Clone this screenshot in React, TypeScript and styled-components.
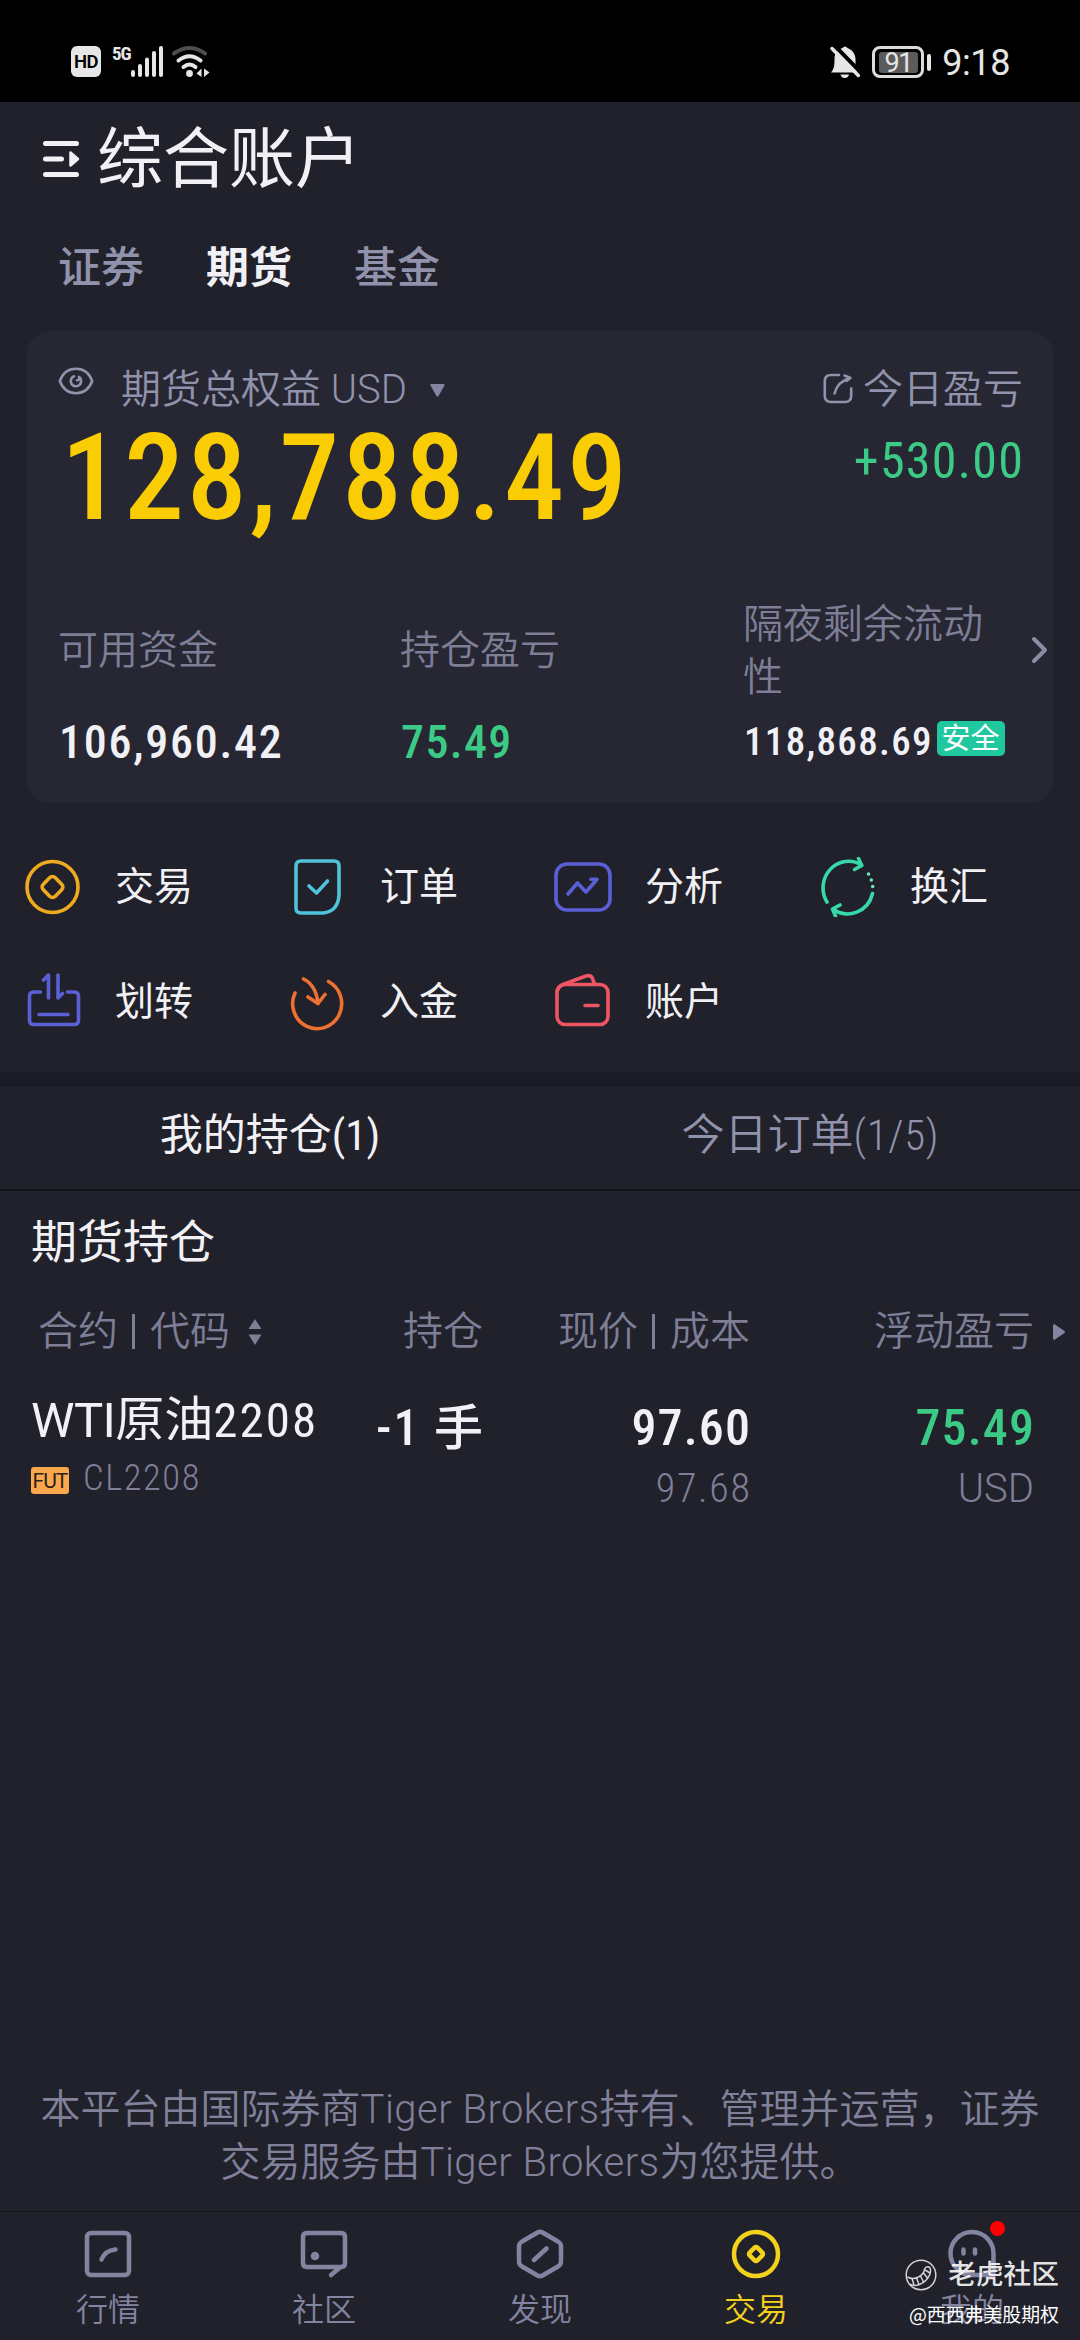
import React from 'react';
import styled, { createGlobalStyle } from 'styled-components';

const c = {
  page: '#21212b',
  card: '#272733',
  band: '#1b1b25',
  line: '#14141c',
  white: '#f1f1f5',
  soft: '#9192ab',
  muted: '#7e7e97',
  green: '#3ccb86',
  gold: '#facc04',
};

const GlobalStyle = createGlobalStyle`
  * { box-sizing: border-box; }
  body {
    margin: 0;
    background: ${c.page};
    font-family: 'Roboto Condensed', 'Noto Sans CJK SC', sans-serif;
    font-weight: 400;
    color: ${c.white};
  }
  svg { display: block; flex: none; }
`;

const Screen = styled.div`
  position: relative;
  display: flex;
  flex-direction: column;
  width: 1080px;
  height: 2340px;
  overflow: hidden;
  background: ${c.page};
`;

/* Figures, tracked a little wider than the Chinese text */
const Num = styled.span<{ $ls?: number }>`
  letter-spacing: ${(p) => p.$ls ?? 0.043}em;
  margin-right: -${(p) => p.$ls ?? 0.043}em;
`;
/* Latin words in the full-width face */
const Latin = styled.span<{ $ls?: number }>`
  font-family: Roboto, sans-serif;
  letter-spacing: ${(p) => p.$ls ?? 0}em;
`;

/* ---------- status bar ---------- */
const StatusBar = styled.header`
  display: flex;
  justify-content: space-between;
  align-items: flex-start;
  height: 102px;
  padding: 46px 70px 0 71px;
  background: #000;
  color: #e6e6e6;
`;
const StatusGroup = styled.div`
  display: flex;
  align-items: flex-start;
`;
const HdBadge = styled.span`
  width: 30px;
  height: 31px;
  border-radius: 6px;
  background: #e6e6e6;
  color: #000;
  font-family: Roboto, sans-serif;
  font-size: 18.5px;
  font-weight: 600;
  line-height: 33px;
  text-align: center;
  letter-spacing: -0.5px;
`;
const NetLabel = styled.span`
  margin-left: 11px;
  font-size: 19px;
  font-weight: 700;
  line-height: 15px;
  letter-spacing: -1px;
`;
const WifiSlot = styled.span`
  margin-left: 6px;
`;
const Battery = styled.span`
  display: flex;
  align-items: center;
  justify-content: center;
  width: 52px;
  height: 32px;
  margin-left: 12px;
  border: 3px solid #dcdcdc;
  border-radius: 8px;
`;
const BatteryLevel = styled.span`
  width: 39px;
  height: 21px;
  border-radius: 3px;
  background: #5b5b5b;
  font-family: Roboto, sans-serif;
  font-size: 27px;
  line-height: 22px;
  letter-spacing: -1.5px;
  text-align: center;
`;
const BatteryNub = styled.span`
  width: 4px;
  height: 17px;
  margin: 8px 0 0 3px;
  border-radius: 2px;
  background: #e6e6e6;
`;
const Clock = styled.span`
  margin-left: 11px;
  font-family: Roboto, sans-serif;
  font-size: 36px;
  line-height: 34px;
  letter-spacing: -0.4px;
`;

/* ---------- title and account tabs ---------- */
const TitleRow = styled.div`
  display: flex;
  align-items: center;
  height: 116px;
  padding-left: 43px;
`;
const MenuSlot = styled.span`
  margin-top: -3px;
`;
const Title = styled.h1`
  margin: 0 0 0 17px;
  font-size: 66px;
  font-weight: 400;
  line-height: 116px;
`;
const AccountTabs = styled.nav`
  display: flex;
  gap: 62px;
  height: 100px;
  padding-left: 58px;
`;
const AccountTab = styled.span<{ $on?: boolean }>`
  font-size: 43px;
  font-weight: ${(p) => (p.$on ? 600 : 500)};
  line-height: 100px;
  color: ${(p) => (p.$on ? c.white : c.soft)};
`;

/* ---------- equity card ---------- */
const Card = styled.section`
  height: 472px;
  margin: 13px 26px 0;
  padding: 35px 0 0 32px;
  border-radius: 25px;
  background: ${c.card};
`;
const CardTop = styled.div`
  display: flex;
  justify-content: space-between;
  padding-right: 31px;
`;
const LabelLine = styled.div`
  display: flex;
  align-items: center;
  height: 48px;
  font-size: 40px;
  font-weight: 350;
  line-height: 48px;
  color: ${c.soft};
  white-space: pre;
`;
const EyeSlot = styled.span`
  margin: -19px 27px 0 0;
`;
const CaretSlot = styled.span`
  margin-left: 23px;
`;
const EditSlot = styled.span`
  margin: -3px 10px 0 0;
`;
const Equity = styled.div`
  margin: 14px 0 0 3px;
  font-size: 120px;
  font-weight: 500;
  line-height: 100px;
  color: ${c.gold};
`;
const DayGain = styled.div`
  margin-top: 22px;
  font-size: 50px;
  font-weight: 400;
  line-height: 50px;
  text-align: right;
  color: ${c.green};
`;
const Stats = styled.div`
  display: grid;
  grid-template-columns: 342px 343px 260px 1fr;
  grid-template-rows: 105px 50px;
  row-gap: 13px;
  margin-top: 71px;
`;
const StatLabel = styled.div`
  align-self: center;
  max-width: 242px;
  font-size: 40px;
  font-weight: 350;
  line-height: 52.7px;
  color: ${c.muted};
`;
const StatValue = styled.div<{ $size?: number; $tone?: string }>`
  display: flex;
  align-items: center;
  padding-left: 1px;
  font-size: ${(p) => p.$size ?? 46}px;
  font-weight: 500;
  line-height: 50px;
  white-space: nowrap;
  color: ${(p) => p.$tone ?? c.white};
`;
const SafeBadge = styled.span`
  margin: -8px 0 0 5px;
  padding: 0 5px;
  height: 35px;
  border-radius: 5px;
  background: #20c8a0;
  font-size: 29px;
  font-weight: 400;
  line-height: 36px;
  color: #fff;
`;
const ChevronSlot = styled.div`
  align-self: center;
  justify-self: end;
  margin: -4px 6px 0 0;
`;

/* ---------- shortcuts ---------- */
const Shortcuts = styled.div`
  display: grid;
  grid-template-columns: repeat(4, 265px);
  grid-auto-rows: 115px;
  margin: 26px 0 13px;
  padding-left: 22px;
`;
const Shortcut = styled.div`
  display: flex;
  align-items: center;
  gap: 33px;
  font-size: 39px;
  line-height: 60px;
`;

/* ---------- positions ---------- */
const Band = styled.div`
  height: 15px;
  background: ${c.band};
`;
const ListTabs = styled.div`
  display: grid;
  grid-template-columns: 1fr 1fr;
  height: 104px;
  border-bottom: 2px solid ${c.line};
`;
const ListTab = styled.div<{ $on?: boolean }>`
  font-size: 43px;
  font-weight: ${(p) => (p.$on ? 400 : 350)};
  line-height: 96px;
  text-align: center;
  color: ${(p) => (p.$on ? c.white : c.soft)};
`;
const SectionTitle = styled.h2`
  margin: 0;
  padding: 0 0 3px 31px;
  font-size: 46px;
  font-weight: 400;
  line-height: 103px;
`;
const TableRow = styled.div`
  display: grid;
  grid-template-columns: 300px 151px 267px 284px 1fr;
  padding-left: 32px;
`;
const HeadCell = styled.div<{ $first?: boolean }>`
  display: flex;
  align-items: center;
  justify-content: ${(p) => (p.$first ? 'flex-start' : 'flex-end')};
  height: 69px;
  padding-left: ${(p) => (p.$first ? 6 : 0)}px;
  font-size: 40px;
  font-weight: 350;
  line-height: 68px;
  color: ${c.muted};
  white-space: nowrap;
`;
const Bar = styled.i`
  width: 3px;
  height: 35px;
  margin: 0 15px 0 14px;
  background: ${c.muted};
`;
const SortSlot = styled.span`
  margin-left: 18px;
`;
const MoreSlot = styled.span`
  margin-right: 15px;
`;
const Contract = styled.div`
  padding-top: 24px;
`;
const ContractName = styled.div`
  height: 50px;
  overflow: hidden;
  margin-left: -1px;
  font-size: 49px;
  line-height: 62px;
  white-space: nowrap;
`;
const ContractCode = styled.div`
  display: flex;
  align-items: center;
  height: 40px;
  margin-top: 18px;
  font-size: 36.5px;
  font-weight: 350;
  line-height: 40px;
  color: ${c.muted};
`;
const FutTag = styled.span`
  width: 38px;
  height: 27px;
  margin: 5px 14px 0 -1px;
  border-radius: 3px;
  background: #f9a84e;
  font-family: Roboto, sans-serif;
  font-size: 21px;
  font-weight: 400;
  line-height: 28px;
  letter-spacing: -1px;
  text-align: center;
  color: #2c2118;
`;
const Figures = styled.div`
  padding-top: 32px;
  text-align: right;
`;
const Primary = styled.div<{ $tone?: string }>`
  font-size: 50px;
  font-weight: 500;
  line-height: 60px;
  white-space: pre;
  color: ${(p) => p.$tone ?? c.white};
`;
const Amount = styled.span`
  letter-spacing: 0.04em;
`;
const Unit = styled.span`
  font-size: 49px;
`;
const Secondary = styled.div`
  margin-top: 1px;
  font-size: 40px;
  font-weight: 350;
  line-height: 60px;
  color: ${c.muted};
`;

/* ---------- footer ---------- */
const Disclaimer = styled.p`
  margin: auto 0 22px;
  font-size: 40px;
  font-weight: 350;
  line-height: 53px;
  text-align: center;
  white-space: nowrap;
  color: #81819b;
`;
const TabBar = styled.nav`
  display: grid;
  grid-template-columns: repeat(5, 1fr);
  height: 129px;
  border-top: 1px solid ${c.line};
`;
const TabItem = styled.div<{ $on?: boolean }>`
  display: flex;
  flex-direction: column;
  align-items: center;
  padding-top: 17px;
  font-size: 32px;
  font-weight: 350;
  line-height: 40px;
  color: ${(p) => (p.$on ? '#f2d21c' : '#8384a0')};
`;
const TabIcon = styled.span`
  position: relative;
  margin-bottom: 11px;
`;
const RedDot = styled.i`
  position: absolute;
  top: -8px;
  right: -8px;
  width: 15px;
  height: 15px;
  border-radius: 50%;
  background: #fe0000;
`;
const Watermark = styled.div`
  position: absolute;
  right: 21px;
  bottom: 6px;
  display: flex;
  flex-direction: column;
  align-items: flex-end;
  color: rgba(255, 255, 255, 0.88);
`;
const WatermarkBrand = styled.div`
  display: flex;
  align-items: center;
  gap: 11px;
  font-size: 27.7px;
  font-weight: 500;
  line-height: 42px;
`;
const WatermarkUser = styled.div`
  font-family: 'Noto Sans CJK SC', sans-serif;
  font-size: 18.9px;
  line-height: 36px;
  padding-bottom: 2px;
  color: #fff;
`;

/* ---------- icons ---------- */
type IconProps = { w?: number; h?: number; color?: string; sw?: number; children: React.ReactNode };
function Icon({ w = 60, h = 60, color = 'currentColor', sw = 3.6, children }: IconProps) {
  return (
    <svg width={w} height={h} viewBox={`0 0 ${w} ${h}`} fill="none" stroke={color} strokeWidth={sw} strokeLinecap="round" strokeLinejoin="round">
      {children}
    </svg>
  );
}

const SignalBars = () => (
  <svg width="34" height="31" viewBox="0 0 34 31" fill="#e6e6e6">
    <rect x="0" y="24" width="4" height="7" rx="2" />
    <rect x="7" y="18" width="4" height="13" rx="2" />
    <rect x="14" y="11.5" width="4" height="19.5" rx="2" />
    <rect x="21" y="5" width="4" height="26" rx="2" />
    <rect x="28" y="0" width="4" height="31" rx="2" />
  </svg>
);
const Wifi = () => (
  <svg width="40" height="34" viewBox="0 0 40 34" fill="none" strokeLinecap="round" strokeWidth="4">
    <path d="M3 7.5Q18.500 -3.500 34 7.500" stroke="#4d4d4d" />
    <path d="M7.500 14.500Q18.500 6 29.500 14.500" stroke="#e6e6e6" />
    <path d="M12.500 21Q18.500 16 24.500 21" stroke="#e6e6e6" />
    <circle cx="18.500" cy="27.500" r="3.400" fill="#e6e6e6" />
    <path d="M30.500 22.500V31L25.500 27.500ZM33 22.500V31L38.500 26.500Z" fill="#e6e6e6" />
  </svg>
);
const BellOff = () => (
  <svg width="30" height="32" viewBox="0 0 30 32" fill="none" strokeLinecap="round">
    <path d="M1 26.500C4 23 4.500 20 4.500 13C4.500 6 9 3 12.500 2Q15 -1 17.500 2C22 3.500 25.500 8 25.500 13V20L27 26.500Z" fill="#e6e6e6" />
    <path d="M10.500 28.500H19Q18 32 14.700 32T10.500 28.500Z" fill="#e6e6e6" />
    <path d="M5 0L30 25.500" stroke="#000" strokeWidth="4" />
    <path d="M2 2.500L28.300 29.500" stroke="#e6e6e6" strokeWidth="3.400" />
  </svg>
);
const MenuIcon = () => (
  <svg width="37" height="38" viewBox="0 0 37 38">
    <g stroke={c.white} strokeWidth="5" strokeLinecap="round">
      <path d="M2.500 3.500H33.500M2.500 19H18.500M2.500 34.500H33.500" />
    </g>
    <path d="M27.500 12.500L35 19L27.500 25.500Z" fill={c.white} stroke={c.white} strokeWidth="2.500" strokeLinejoin="round" />
  </svg>
);
const EyeIcon = () => (
  <Icon w={36} h={28} sw={2.6}>
    <path d="M1.800 14C5 5.500 10 1.800 18 1.800S31 5.500 34.200 14C31 22.500 26 26.200 18 26.200S5 22.500 1.800 14Z" />
    <path d="M16 9.300A5.200 5.200 0 1 0 21 9.900Q22.500 12.500 19 13.300" />
  </Icon>
);
const EditIcon = () => (
  <Icon w={30} h={31} sw={2.6}>
    <path d="M16 2H8Q1.800 2 1.800 8V23Q1.800 29 8 29H22Q28.200 29 28.200 23V15.500M11.500 20.500C13.500 13 18 7.500 27 5M21.500 2.500L27.500 5L23.500 8" />
  </Icon>
);
const Caret = () => (
  <svg width="15" height="13" viewBox="0 0 15 13" fill="#8485a2"><path d="M1 0H14Q15 .5 14.500 1.500L8.500 12Q7.500 13 6.500 12L.5 1.500Q0 .5 1 0Z" /></svg>
);
const SortIcon = () => (
  <svg width="14" height="26" viewBox="0 0 14 26" fill={c.muted}><path d="M7 0L13.500 10H.5ZM7 26L13.500 15.500H.5Z" /></svg>
);
const MoreIcon = () => (
  <svg width="12" height="16" viewBox="0 0 12 16" fill="#8485a2"><path d="M0 1Q.5 -.3 2 .5L11.500 7Q12.500 8 11.500 9L2 15.500Q.5 16.300 0 15Z" /></svg>
);
const Chevron = () => (
  <Icon w={17} h={28} color="#8c8ca6" sw={4}><path d="M3 3L14 14L3 25" /></Icon>
);

const shortcuts = [
  { label: '交易', icon: <Icon color="#efab1f"><circle cx="30.500" cy="30" r="25.500" /><rect x="22" y="21.500" width="17" height="17" rx="4" transform="rotate(45 30.500 30)" /></Icon> },
  { label: '订单', icon: <Icon color="#4fc3d9"><path d="M14 4H47Q52 4 52 9V38Q51 54.500 36 56H14Q9 56 9 51V9Q9 4 14 4ZM22 29L29.500 36L40.500 24" /></Icon> },
  { label: '分析', icon: <Icon color="#5b5fd6"><rect x="4" y="7" width="54" height="46" rx="11" /><path d="M16 37L25.500 26L34 35L44.500 23M39 22.300H45" /></Icon> },
  { label: '换汇', icon: (
    <Icon color="#35d9ab">
      <path d="M10 45A25.500 26.500 0 0 1 44.500 8M41.500 1.500L44.800 8.500L37.500 12.500M55.500 36.500A25.500 26.500 0 0 1 16 52M23 48L15.500 52L18.500 59" />
      <path d="M51.500 17V17.010M54.300 23V23.010M55.700 29.500V29.510" stroke="#6fe6c6" />
    </Icon>
  ) },
  { label: '划转', icon: <Icon color="#5b5fd6"><path d="M18.500 20H12Q7.500 20 7.500 24.500V48Q7.500 52.500 12 52.500H52Q56.500 52.500 56.500 48V24.500Q56.500 20 52 20H45.500M17 42.500H46M26.500 26V3L21.500 8M36 3V26L40.500 21.500" /></Icon> },
  { label: '入金', icon: <Icon color="#ee7130"><path d="M41.500 9.500A24.500 25 0 1 1 8 21M16.500 7Q29 13 31 31.500M21 25L31 31.500L38 22.500" /></Icon> },
  { label: '账户', icon: <Icon color="#ee5563"><rect x="5" y="12.500" width="51" height="40" rx="8" /><path d="M5 20Q6 14.500 11 12.500L34 4Q39 2.500 40.500 6.500L42.500 12M33 33.500H46" /></Icon> },
];

const tabs = [
  { label: '行情', icon: <Icon w={50} h={50} sw={4.5}><rect x="4" y="4" width="42" height="42" rx="4" /><path d="M18.500 30.500Q22 21.500 32.500 20.500" /></Icon> },
  { label: '社区', icon: <Icon w={50} h={50} sw={4.5}><path d="M8 4H42Q46 4 46 8V34Q46 38 42 38H8Q4 38 4 34V8Q4 4 8 4ZM41 38.500L32 46" /><circle cx="16" cy="27" r="2" /></Icon> },
  { label: '发现', icon: <Icon w={50} h={50} sw={4.5}><path d="M22.500 3.500Q25 2 27.500 3.500L43 12.500Q46 14.500 46 17V33Q46 35.500 43 37.500L27.500 46.500Q25 48 22.500 46.500L7 37.500Q4 35.500 4 33V17Q4 14.500 7 12.500ZM19 31L31.500 19.500" /></Icon> },
  { label: '交易', on: true, icon: <Icon w={50} h={50} sw={4.5}><circle cx="25" cy="25" r="22" /><rect x="19.500" y="19.500" width="11" height="11" rx="2" transform="rotate(45 25 25)" /></Icon> },
  { label: '我的', dot: true, icon: <Icon w={50} h={50} sw={4.5}><path d="M25 46A21.500 21.500 0 1 1 46.500 25V46H25" /><path d="M16.500 20.500V24.500M28 20.500V24.500" /></Icon> },
];

const TigerMark = () => (
  <svg width="32" height="32" viewBox="0 0 32 32" fill="none" stroke="rgba(255,255,255,.8)" strokeWidth="1.500">
    <circle cx="16" cy="16" r="14.800" />
    <path d="M2.500 18Q8 21 13.500 18Q19.500 14.500 19.500 10Q21 7 24 8Q26.500 9.500 25 15Q22 22.500 14.500 25.500Q8.500 27.500 5 25" />
    <path d="M7 19.500L9 26M11.500 19L14 25.500M15.500 17L18.500 23M18.500 14L22.500 19M20 11L25 14" />
  </svg>
);

export default function App() {
  return (
    <Screen>
      <GlobalStyle />
      <StatusBar>
        <StatusGroup>
          <HdBadge>HD</HdBadge>
          <NetLabel>5G</NetLabel>
          <SignalBars />
          <WifiSlot><Wifi /></WifiSlot>
        </StatusGroup>
        <StatusGroup>
          <BellOff />
          <Battery><BatteryLevel>91</BatteryLevel></Battery>
          <BatteryNub />
          <Clock>9:18</Clock>
        </StatusGroup>
      </StatusBar>

      <TitleRow>
        <MenuSlot><MenuIcon /></MenuSlot>
        <Title>综合账户</Title>
      </TitleRow>
      <AccountTabs>
        <AccountTab>证券</AccountTab>
        <AccountTab $on>期货</AccountTab>
        <AccountTab>基金</AccountTab>
      </AccountTabs>

      <Card>
        <CardTop>
          <div>
            <LabelLine>
              <EyeSlot><EyeIcon /></EyeSlot>
              <span>期货总权益<Latin> USD</Latin></span>
              <CaretSlot><Caret /></CaretSlot>
            </LabelLine>
            <Equity><Num $ls={0.024}>128,788.49</Num></Equity>
          </div>
          <div>
            <LabelLine>
              <EditSlot><EditIcon /></EditSlot>
              今日盈亏
            </LabelLine>
            <DayGain><Num $ls={0.026}>+530.00</Num></DayGain>
          </div>
        </CardTop>
        <Stats>
          <StatLabel>可用资金</StatLabel>
          <StatLabel>持仓盈亏</StatLabel>
          <StatLabel>隔夜剩余流动性</StatLabel>
          <ChevronSlot><Chevron /></ChevronSlot>
          <StatValue><Num $ls={0.038}>106,960.42</Num></StatValue>
          <StatValue $tone={c.green}><Num $ls={0.03}>75.49</Num></StatValue>
          <StatValue $size={39}><Num $ls={0.034}>118,868.69</Num><SafeBadge>安全</SafeBadge></StatValue>
        </Stats>
      </Card>

      <Shortcuts>
        {shortcuts.map((s) => (
          <Shortcut key={s.label}>{s.icon}{s.label}</Shortcut>
        ))}
      </Shortcuts>

      <Band />
      <ListTabs>
        <ListTab $on>我的持仓<Num $ls={0}>(1)</Num></ListTab>
        <ListTab>今日订单<Num $ls={0.015}>(1/5)</Num></ListTab>
      </ListTabs>
      <SectionTitle>期货持仓</SectionTitle>
      <TableRow>
        <HeadCell $first>合约<Bar />代码<SortSlot><SortIcon /></SortSlot></HeadCell>
        <HeadCell>持仓</HeadCell>
        <HeadCell>现价<Bar />成本</HeadCell>
        <HeadCell>浮动盈亏</HeadCell>
        <HeadCell><MoreSlot><MoreIcon /></MoreSlot></HeadCell>
      </TableRow>
      <TableRow>
        <Contract>
          <ContractName><Latin $ls={-0.015}>WTI</Latin>原油<Num>2208</Num></ContractName>
          <ContractCode><FutTag>FUT</FutTag><Num>CL2208</Num></ContractCode>
        </Contract>
        <Figures><Primary><Amount>-1 </Amount><Unit>手</Unit></Primary></Figures>
        <Figures>
          <Primary><Num $ls={0.023}>97.60</Num></Primary>
          <Secondary><Num>97.68</Num></Secondary>
        </Figures>
        <Figures>
          <Primary $tone={c.green}><Num $ls={0.023}>75.49</Num></Primary>
          <Secondary><Latin>USD</Latin></Secondary>
        </Figures>
      </TableRow>

      <Disclaimer>
        本平台由国际券商<Latin $ls={0.012}>Tiger Brokers</Latin>持有、管理并运营，证券<br />
        交易服务由<Latin $ls={0.012}>Tiger Brokers</Latin>为您提供。
      </Disclaimer>
      <TabBar>
        {tabs.map((t) => (
          <TabItem key={t.label} $on={t.on}>
            <TabIcon>{t.icon}{t.dot && <RedDot />}</TabIcon>
            {t.label}
          </TabItem>
        ))}
      </TabBar>
      <Watermark>
        <WatermarkBrand><TigerMark />老虎社区</WatermarkBrand>
        <WatermarkUser>@西西弗美股期权</WatermarkUser>
      </Watermark>
    </Screen>
  );
}
